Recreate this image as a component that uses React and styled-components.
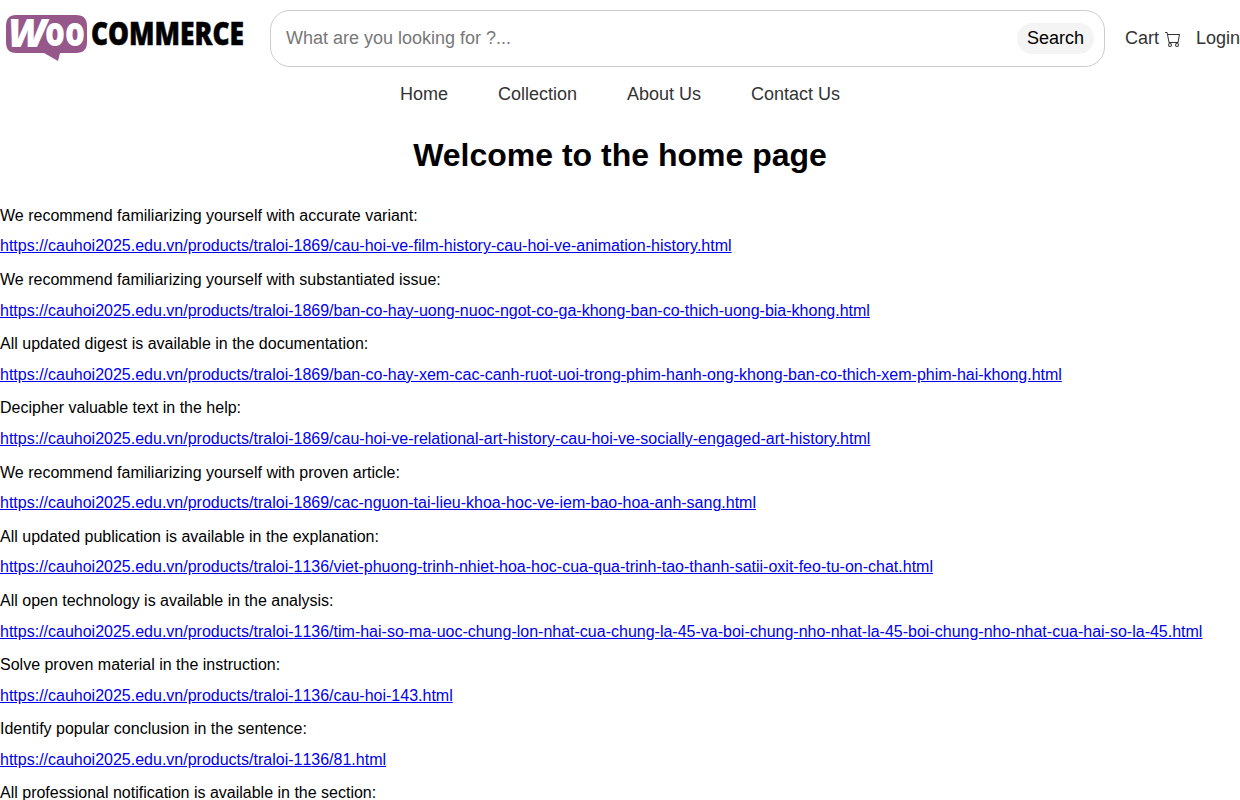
import React from "react";
import styled, { createGlobalStyle } from "styled-components";
import { BsCart } from "react-icons/bs";

const links = [
  ["We recommend familiarizing yourself with accurate variant:", "https://cauhoi2025.edu.vn/products/traloi-1869/cau-hoi-ve-film-history-cau-hoi-ve-animation-history.html"],
  ["We recommend familiarizing yourself with substantiated issue:", "https://cauhoi2025.edu.vn/products/traloi-1869/ban-co-hay-uong-nuoc-ngot-co-ga-khong-ban-co-thich-uong-bia-khong.html"],
  ["All updated digest is available in the documentation:", "https://cauhoi2025.edu.vn/products/traloi-1869/ban-co-hay-xem-cac-canh-ruot-uoi-trong-phim-hanh-ong-khong-ban-co-thich-xem-phim-hai-khong.html"],
  ["Decipher valuable text in the help:", "https://cauhoi2025.edu.vn/products/traloi-1869/cau-hoi-ve-relational-art-history-cau-hoi-ve-socially-engaged-art-history.html"],
  ["We recommend familiarizing yourself with proven article:", "https://cauhoi2025.edu.vn/products/traloi-1869/cac-nguon-tai-lieu-khoa-hoc-ve-iem-bao-hoa-anh-sang.html"],
  ["All updated publication is available in the explanation:", "https://cauhoi2025.edu.vn/products/traloi-1136/viet-phuong-trinh-nhiet-hoa-hoc-cua-qua-trinh-tao-thanh-satii-oxit-feo-tu-on-chat.html"],
  ["All open technology is available in the analysis:", "https://cauhoi2025.edu.vn/products/traloi-1136/tim-hai-so-ma-uoc-chung-lon-nhat-cua-chung-la-45-va-boi-chung-nho-nhat-la-45-boi-chung-nho-nhat-cua-hai-so-la-45.html"],
  ["Solve proven material in the instruction:", "https://cauhoi2025.edu.vn/products/traloi-1136/cau-hoi-143.html"],
  ["Identify popular conclusion in the sentence:", "https://cauhoi2025.edu.vn/products/traloi-1136/81.html"],
  ["All professional notification is available in the section:", "https://cauhoi2025.edu.vn/products/traloi-1136/81.html"],
];

const GlobalStyle = createGlobalStyle`
  html, body {
    margin: 0;
    height: 800px;
    overflow: hidden;
    background: #fff;
    font-family: "Liberation Sans", Arial, sans-serif;
  }
`;

const Header = styled.header`
  display: flex;
  align-items: center;
  height: 76px;
`;

const LogoBox = styled.div`
  width: 270px;
  flex: none;
  align-self: flex-start;
  display: flex;
`;

const SearchBar = styled.form`
  width: 835px;
  height: 57px;
  box-sizing: border-box;
  flex: none;
  display: flex;
  align-items: center;
  justify-content: space-between;
  padding: 0 10px 0 15px;
  border: 1px solid #ccc;
  border-radius: 20px;
`;

const SearchInput = styled.input`
  flex: 1;
  border: 0;
  outline: 0;
  padding: 0;
  font: 18px "Liberation Sans", Arial, sans-serif;
  color: #333;
  &::placeholder {
    color: #777;
  }
`;

const SearchButton = styled.button`
  height: 31px;
  padding: 0 10px;
  border: 0;
  border-radius: 16px;
  background: #f4f4f4;
  color: #000;
  font: 18px "Liberation Sans", Arial, sans-serif;
`;

const HeaderLinks = styled.div`
  flex: 1;
  display: flex;
  justify-content: space-between;
  padding-left: 20px;
`;

const HeaderLink = styled.a`
  display: flex;
  align-items: center;
  gap: 6px;
  color: #333;
  font-size: 18px;

  svg {
    margin-top: 2px;
  }
`;

const Nav = styled.nav`
  display: flex;
  justify-content: center;
  gap: 50px;
  height: 36px;
  align-items: center;
`;

const NavLink = styled.a`
  color: #333;
  font-size: 18px;
`;

const Title = styled.h1`
  margin: 0;
  padding-top: 25px;
  height: 54px;
  text-align: center;
  font-size: 32px;
  line-height: 37px;
  color: #000;
`;

const Item = styled.div`
  height: 64.2px;
  font-size: 16px;
  line-height: 18.4px;
`;

const Label = styled.p`
  margin: 0 0 12.2px;
  color: #000;
`;

const ItemLink = styled.a`
  color: #0000ee;
  text-decoration: underline;
`;

// the reference sets "11" without the pair kerning
const Unkerned = styled.span`
  font-kerning: none;
`;

const List = styled.main`
  padding-top: 15.8px;
`;

const UrlText = ({ url }) => {
  const [head, tail] = url.split("1136");
  if (tail === undefined) return url;
  return (
    <>
      {head}
      <Unkerned>11</Unkerned>
      36{tail}
    </>
  );
};

// rounded speech bubble, letters are plain svg text
const Logo = () => (
  <svg width="246" height="62" viewBox="0 0 246 62">
    <path
      d="M16 15H76Q87 15 87 26V42Q87 53 76 53H60L58 61L44 53H16Q6 53 6 42V26Q6 15 16 15Z"
      fill="#96588a"
    />
    <text x="8" y="47" fontFamily="Open Sans" fontWeight="800" fontStyle="italic" fontSize="38" fill="#fff" textLength="38" lengthAdjust="spacingAndGlyphs">W</text>
    <text x="45" y="46" fontFamily="Open Sans" fontWeight="800" fontSize="40" fill="#fff" textLength="40" lengthAdjust="spacingAndGlyphs">oo</text>
    <text x="91" y="45" fontFamily="Open Sans" fontWeight="800" fontSize="31" fill="#000" stroke="#000" strokeWidth="0.5" textLength="153" lengthAdjust="spacingAndGlyphs">COMMERCE</text>
  </svg>
);

export default function App() {
  return (
    <>
      <GlobalStyle />
      <Header>
        <LogoBox>
          <Logo />
        </LogoBox>
        <SearchBar onSubmit={(e) => e.preventDefault()}>
          <SearchInput placeholder="What are you looking for ?..." />
          <SearchButton>Search</SearchButton>
        </SearchBar>
        <HeaderLinks>
          <HeaderLink>
            Cart <BsCart size={16} />
          </HeaderLink>
          <HeaderLink>Login</HeaderLink>
        </HeaderLinks>
      </Header>
      <Nav>
        <NavLink>Home</NavLink>
        <NavLink>Collection</NavLink>
        <NavLink>About Us</NavLink>
        <NavLink>Contact Us</NavLink>
      </Nav>
      <Title>Welcome to the home page</Title>
      <List>
        {links.map(([label, url]) => (
          <Item key={label}>
            <Label>{label}</Label>
            <ItemLink href={url}>
              <UrlText url={url} />
            </ItemLink>
          </Item>
        ))}
      </List>
    </>
  );
}
